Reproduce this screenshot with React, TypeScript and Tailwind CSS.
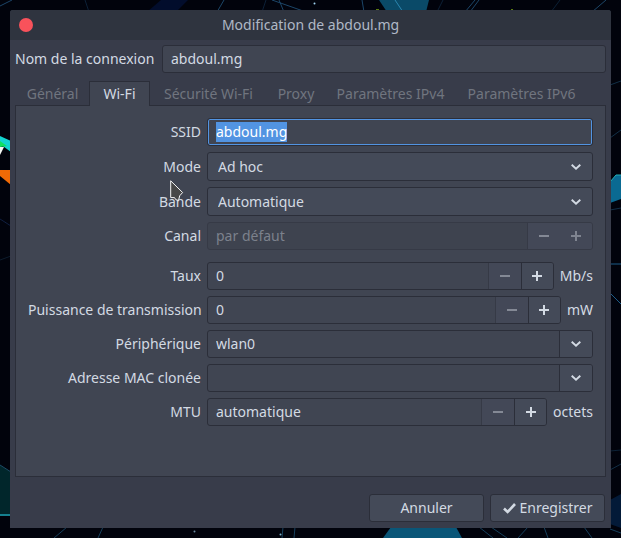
import React, { useEffect, useRef } from 'react';

const box = 'h-7 rounded-[3px] border border-[#2b2e39] bg-[#404552]';
const field = 'min-w-0 flex-1 bg-transparent px-2 text-[#d3dae3] outline-none';

function Chevron() {
  return (
    <svg width="10" height="6" viewBox="0 0 10 6" fill="none" stroke="#d3dae3" strokeWidth="1.9" aria-hidden="true">
      <path d="M0.7 0.7 5 4.6 9.3 0.7" />
    </svg>
  );
}

function Sign({ plus = false }: { plus?: boolean }) {
  return (
    <svg width="10" height="10" viewBox="0 0 10 10" fill="currentColor" aria-hidden="true">
      <path d={plus ? 'M0 4h4V0h2v4h4v2H6v4H4V6H0z' : 'M0 4h10v2H0z'} />
    </svg>
  );
}

function Label({ id, children }: { id: string; children: string }) {
  return (
    <label htmlFor={id} className="text-right whitespace-nowrap">
      {children}
    </label>
  );
}

function SelectRow({ id, label, value }: { id: string; label: string; value: string }) {
  return (
    <>
      <Label id={id}>{label}</Label>
      <div className="relative">
        <select
          id={id}
          className="block h-[29px] w-full appearance-none rounded-[3px] border border-[#2b2e39] bg-[#444a58] px-[10px] outline-none"
        >
          <option>{value}</option>
        </select>
        <span className="pointer-events-none absolute inset-y-0 right-3 flex items-center">
          <Chevron />
        </span>
      </div>
    </>
  );
}

type SpinProps = { id: string; label: string; value: string; unit?: string; disabled?: boolean };

function SpinRow({ id, label, value, unit, disabled = false }: SpinProps) {
  return (
    <>
      <Label id={id}>{label}</Label>
      <div className="flex items-center gap-1.5">
        <div
          className={
            disabled
              ? 'flex h-7 min-w-0 flex-1 overflow-hidden rounded-[3px] border border-[#363a46] bg-[#3e434f]'
              : `flex min-w-0 flex-1 overflow-hidden ${box}`
          }
        >
          <input
            id={id}
            disabled={disabled}
            defaultValue={value}
            className={disabled ? 'min-w-0 flex-1 bg-transparent px-2 text-[#7c818c]' : field}
          />
          <button
            aria-label="Diminuer"
            disabled
            className="flex w-[33px] items-center justify-center border-l border-[#363a46] bg-[#434857] text-[#848995]"
          >
            <Sign />
          </button>
          <button
            aria-label="Augmenter"
            disabled={disabled}
            className={
              disabled
                ? 'flex w-8 items-center justify-center bg-[#434857] text-[#7f8490]'
                : 'flex w-8 items-center justify-center border-l border-[#2b2e39] bg-[#444a58] text-[#d3dae3]'
            }
          >
            <Sign plus />
          </button>
        </div>
        {unit && <span>{unit}</span>}
      </div>
    </>
  );
}

function ComboRow({ id, label, value }: { id: string; label: string; value: string }) {
  return (
    <>
      <Label id={id}>{label}</Label>
      <div className={`flex overflow-hidden ${box}`}>
        <input id={id} defaultValue={value} className={field} />
        <button
          aria-label="Ouvrir la liste"
          className="flex w-[33px] items-center justify-center border-l border-[#2b2e39] bg-[#444a58]"
        >
          <Chevron />
        </button>
      </div>
    </>
  );
}

function Wallpaper() {
  return (
    <svg
      className="absolute inset-0 h-full w-full"
      viewBox="0 0 621 538"
      preserveAspectRatio="none"
      fill="none"
      aria-hidden="true"
    >
      <path fill="#020d2c" d="M161 0h27l-12 12h-29z" />
      <path fill="#0a4a68" d="M379 0h50l-3 12h-39z" />
      <path stroke="#2b87b0" d="M395 0l8 12" />
      <path stroke="#1c4668" d="M272 0l34 12M279 0l5 12M224 0l-7 12M362 0l2 12M475 0l-10 12M479 0l-9 12M606 0l-14 12M12 0L0 6" />
      <path stroke="#0c2036" d="M85 0l4 12M266 0l-4 12M443 0l-6 12M560 0l-9 12" />
      <circle cx="314.500" cy="3.500" r="1" fill="#9fd4f0" />
      <path fill="#5a7a10" d="M376 9h3v1h-3zM511 9h2v1h-2z" />
      <path fill="#12d3d0" d="M0 136l11 5v11L0 144z" />
      <path fill="#10e060" d="M0 141l7 5-7 1z" />
      <path fill="#f4f7f4" d="M0 147l4 0-4 8z" />
      <path fill="#f06a06" d="M0 170h11v15L0 176z" />
      <path stroke="#101f40" d="M0 219l11 7" />
      <path stroke="#0d1c2c" d="M0 260l11-4" />
      <path fill="#01262b" d="M0 465l11 7v43H0z" />
      <path stroke="#1d4a66" d="M0 465l11 7" />
      <path stroke="#15808f" strokeWidth="2" d="M0 515h11" />
      <path fill="#0a6a92" d="M610 182l6-7h5v24l-11 4z" />
      <path stroke="#22b0b8" d="M610 182l6-7h5" />
      <path stroke="#123048" d="M610 210l11-2M610 85l11-4M610 138l11-8M610 470l11-6" />
      <path stroke="#1c5c88" d="M610 264h11M610 293l11 11" />
      <path stroke="#0c2236" d="M610 451l11-1" />
      <path fill="#031a38" d="M610 500l11-6v34l-11-4z" />
      <path fill="#0a5678" d="M391 527h65l6 11h-79z" />
      <path stroke="#17405c" d="M67 527l-13 11M103 527l-5 11M283 527l-1 11M295 527l-1 11M479 527l14 11M491 527l16 11M528 527l-10 11M544 527l4 11M584 527l8 11M610 529l11 4" />
      <circle cx="194.500" cy="531.500" r="1" fill="#6d8ba0" />
      <circle cx="280.500" cy="534.500" r="1" fill="#7fb4cc" />
    </svg>
  );
}

const tabs = [
  { name: 'Général', width: 'w-[73px]' },
  { name: 'Wi-Fi', width: 'w-[61px]' },
  { name: 'Sécurité Wi-Fi', width: 'w-[117px]' },
  { name: 'Proxy', width: 'w-[58px]' },
  { name: 'Paramètres IPv4', width: 'w-[131px]' },
  { name: 'Paramètres IPv6', width: 'w-[131px]' },
];

export default function App() {
  const ssid = useRef<HTMLInputElement>(null);

  useEffect(() => {
    ssid.current?.focus();
    ssid.current?.select();
  }, []);

  return (
    <div className="relative flex min-h-screen flex-col bg-[#01030c] p-[10px] font-['Noto_Sans',sans-serif] text-[14px] leading-5 text-[#d3dae3]">
      <Wallpaper />
      <main className="relative flex flex-1 flex-col rounded-t-[3px] bg-[#383c4a]">
        <header className="relative flex h-[30px] items-center justify-center rounded-t-[3px] bg-[#2f343f] text-[#afb8c6]">
          <button aria-label="Fermer" className="absolute left-[9px] size-[14px] rounded-full bg-[#f8525b]" />
          <h1>Modification de abdoul.mg</h1>
        </header>

        <div className="flex items-center px-[5px] pt-[5px]">
          <label htmlFor="name" className="w-[147px] whitespace-nowrap">
            Nom de la connexion
          </label>
          <div className={`flex flex-1 ${box}`}>
            <input id="name" defaultValue="abdoul.mg" className={field} />
          </div>
        </div>

        <div role="tablist" className="z-10 mt-2 -mb-px flex h-[25px] px-[6px]">
          {tabs.map((tab) => (
            <button
              key={tab.name}
              role="tab"
              aria-selected={tab.name === 'Wi-Fi'}
              className={`flex items-center justify-center whitespace-nowrap ${tab.width} ${
                tab.name === 'Wi-Fi'
                  ? 'border border-b-0 border-[#2b2e39] bg-[#404552]'
                  : 'text-[#70757f]'
              }`}
            >
              {tab.name}
            </button>
          ))}
        </div>

        <section className="mx-[5px] flex-1 border border-[#2b2e39] bg-[#404552] p-3">
          <div className="grid grid-cols-[173px_1fr] items-center gap-1.5 pl-0">
            <Label id="ssid">SSID</Label>
            <div className="flex h-7 rounded-[3px] border border-[#2b2e39] bg-[#404552] focus-within:shadow-[inset_0_0_0_1px_#5294e2]">
              <input
                id="ssid"
                ref={ssid}
                defaultValue="abdoul.mg"
                className="min-w-0 flex-1 bg-transparent px-2 outline-none selection:bg-[#5294e2] selection:text-white"
              />
            </div>
            <SelectRow id="mode" label="Mode" value="Ad hoc" />
            <SelectRow id="band" label="Bande" value="Automatique" />
            <SpinRow id="channel" label="Canal" value="par défaut" disabled />
          </div>
          <div className="mt-3 grid grid-cols-[173px_1fr] items-center gap-1.5">
            <SpinRow id="rate" label="Taux" value="0" unit="Mb/s" />
            <SpinRow id="power" label="Puissance de transmission" value="0" unit="mW" />
            <ComboRow id="device" label="Périphérique" value="wlan0" />
            <ComboRow id="mac" label="Adresse MAC clonée" value="" />
            <SpinRow id="mtu" label="MTU" value="automatique" unit="octets" />
          </div>
        </section>

        <footer className="flex justify-end gap-1.5 px-1.5 pt-[17px] pb-1.5">
          <button className="h-7 w-[115px] rounded-[3px] border border-[#2b2e39] bg-[#444a58]">Annuler</button>
          <button className="flex h-7 w-[115px] items-center justify-center gap-1 rounded-[3px] border border-[#2b2e39] bg-[#444a58]">
            <svg width="13" height="11" viewBox="0 0 13 11" fill="none" stroke="#d3dae3" strokeWidth="2.6" aria-hidden="true">
              <path d="M1 5.500 4.600 9 12 1" />
            </svg>
            Enregistrer
          </button>
        </footer>

        <svg
          className="pointer-events-none absolute top-[170px] left-[160px]"
          width="14"
          height="22"
          viewBox="0 0 14 22"
          fill="#474747"
          stroke="#f5f5f5"
          aria-hidden="true"
        >
          <path d="M0.700 0.800V17.600H4.500L5.800 19.700 8.500 20.500 9.700 15.800 12.600 12.500z" />
        </svg>
      </main>
    </div>
  );
}
